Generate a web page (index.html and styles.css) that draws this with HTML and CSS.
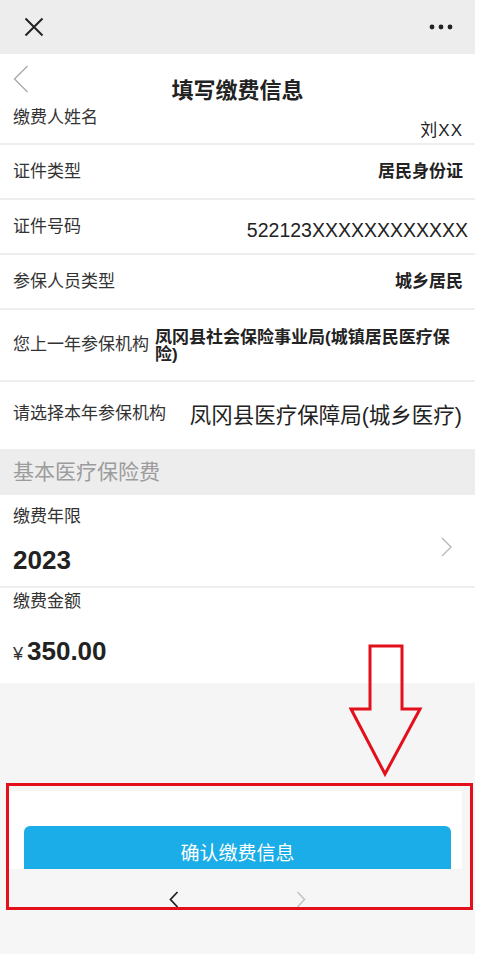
FILE: index.html
```html
<!DOCTYPE html>
<html lang="zh-CN">
<head>
<meta charset="utf-8">
<title>填写缴费信息</title>
<link rel="stylesheet" href="styles.css">
</head>
<body>
<main class="page">
  <header class="topbar">
    <svg class="icon-close" width="20" height="20" viewBox="0 0 20 20"><path d="M1.5 1.5 L18.5 18.5 M18.5 1.5 L1.5 18.5" stroke="#222" stroke-width="2" fill="none"/></svg>
    <svg class="icon-more" width="24" height="6" viewBox="0 0 24 6"><circle cx="3" cy="3" r="2.4" fill="#222"/><circle cx="12" cy="3" r="2.4" fill="#222"/><circle cx="21" cy="3" r="2.4" fill="#222"/></svg>
  </header>

  <div class="titlebar">
    <svg class="icon-back" width="16" height="28" viewBox="0 0 16 28"><path d="M14.5 1 L1.5 14 L14.5 27" stroke="#a8a8a8" stroke-width="1.3" fill="none"/></svg>
    <h1 class="title">填写缴费信息</h1>
    <span></span>
  </div>

  <section class="list">
    <div class="row row-name">
      <span class="label">缴费人姓名</span>
      <span class="value value-name">刘XX</span>
    </div>
    <div class="row row-std">
      <span class="label">证件类型</span>
      <span class="value value-strong">居民身份证</span>
    </div>
    <div class="row row-std">
      <span class="label">证件号码</span>
      <span class="value value-id">522123XXXXXXXXXXXX</span>
    </div>
    <div class="row row-std">
      <span class="label">参保人员类型</span>
      <span class="value value-strong">城乡居民</span>
    </div>
    <div class="row row-prev">
      <span class="label">您上一年参保机构</span>
      <span class="value value-prev">凤冈县社会保险事业局(城镇居民医疗保险)</span>
    </div>
    <div class="row row-cur">
      <span class="label">请选择本年参保机构</span>
      <span class="value value-cur">凤冈县医疗保障局(城乡医疗)</span>
    </div>
  </section>

  <div class="section-head">基本医疗保险费</div>

  <section class="list">
    <div class="row-stack row-year">
      <div class="stack">
        <span class="label">缴费年限</span>
        <span class="big">2023</span>
      </div>
      <svg class="icon-next" width="11" height="20" viewBox="0 0 11 20"><path d="M1 1 L10 10 L1 19" stroke="#b8b8b8" stroke-width="1.4" fill="none"/></svg>
    </div>
    <div class="row-stack row-amount">
      <div class="stack">
        <span class="label">缴费金额</span>
        <span class="big"><span class="yen">¥</span>350.00</span>
      </div>
    </div>
  </section>

  <div class="gap"></div>

  <div class="panel">
    <button class="confirm" type="button">确认缴费信息</button>
  </div>

  <nav class="browser-nav">
    <svg width="10" height="17" viewBox="0 0 10 17"><path d="M8.5 1 L1.5 8.5 L8.5 16" stroke="#222" stroke-width="1.8" fill="none"/></svg>
    <svg width="10" height="17" viewBox="0 0 10 17"><path d="M1.5 1 L8.5 8.5 L1.5 16" stroke="#c4c4c4" stroke-width="1.6" fill="none"/></svg>
  </nav>

  <svg class="arrow" width="80" height="140" viewBox="0 0 80 140"><path d="M21 2 L53 2 L53 65 L71 65 L36 130 L2 65 L21 65 Z" stroke="#e3101c" stroke-width="3" fill="none" stroke-linejoin="miter"/></svg>
  <div class="mark"></div>
</main>
</body>
</html>
```

FILE: styles.css
```css
html {
  background: #ffffff;
}
body {
  margin: 0;
  font-family: "Liberation Sans", "Noto Sans CJK SC", sans-serif;
  color: #333;
}
.page {
  position: relative;
  width: 475px;
  height: 954px;
  overflow: hidden;
  background: #f5f5f5;
  display: flex;
  flex-direction: column;
}

/* top bar */
.topbar {
  height: 54px;
  flex-shrink: 0;
  background: #ededed;
  display: flex;
  align-items: center;
  justify-content: space-between;
  padding: 0 22px 0 24px;
}
.icon-close { margin-top: -1px; }

/* title bar */
.titlebar {
  height: 50px;
  flex-shrink: 0;
  background: #fff;
  display: grid;
  grid-template-columns: 1fr auto 1fr;
  align-items: start;
}
.icon-back {
  margin: 11px 0 0 13px;
}
.title {
  margin: 26px 0 0;
  font-size: 22px;
  line-height: 22px;
  font-weight: 700;
  color: #222;
}

/* list rows */
.list {
  background: #fff;
  flex-shrink: 0;
}
.row {
  display: flex;
  justify-content: space-between;
  align-items: center;
  padding: 0 12px 0 13px;
  border-bottom: 2px solid #eeeeee;
  box-sizing: border-box;
  white-space: nowrap;
}
.label {
  font-size: 17px;
  line-height: 20px;
  color: #333;
  flex-shrink: 0;
}
.value {
  font-size: 17px;
  line-height: 20px;
  color: #222;
}
.row-name {
  height: 41px;
  align-items: stretch;
  padding-top: 4px;
  padding-bottom: 2px;
}
.row-name .label { align-self: flex-start; }
.row-name .value { align-self: flex-end; }
.value-name { letter-spacing: 1px; }
.row-std { height: 55px; }
.value-strong { font-weight: 700; }
.value-id {
  font-size: 19.5px;
  flex-shrink: 0;
  margin-right: -5px;
  padding-top: 6px;
}
.row-prev {
  height: 72px;
  white-space: normal;
  justify-content: flex-start;
}
.value-prev {
  font-weight: 700;
  line-height: 17px;
  margin-left: 6px;
  flex: 1;
  padding-top: 2px;
}
.row-cur {
  height: 67px;
  border-bottom: none;
}
.row-cur .label { margin-top: -4px; }
.value-cur {
  font-size: 21.5px;
  line-height: 26px;
  margin-right: 1px;
}

.section-head {
  height: 46px;
  flex-shrink: 0;
  background: #ededed;
  font-size: 21px;
  line-height: 46px;
  color: #9c9c9c;
  padding-left: 13px;
}

.row-stack {
  display: flex;
  justify-content: space-between;
  align-items: center;
  padding: 0 23px 0 13px;
  box-sizing: border-box;
}
.stack {
  display: flex;
  flex-direction: column;
  align-self: stretch;
}
.row-year {
  height: 93px;
  border-bottom: 2px solid #eeeeee;
  padding-top: 12px;
}
.row-year .big { margin-top: 18px; }
.icon-next { margin-top: 0; }
.row-amount {
  height: 95px;
  padding-top: 4px;
}
.row-amount .big { margin-top: 24px; }
.big {
  font-size: 26px;
  line-height: 30px;
  font-weight: 700;
  color: #222;
}
.yen {
  font-size: 18px;
  font-weight: 400;
  margin-right: 4px;
  color: #333;
}

/* bottom */
.gap {
  height: 108px;
  flex-shrink: 0;
}
.panel {
  height: 78px;
  flex-shrink: 0;
  margin: 0 13px 0 9px;
  background: #fff;
  overflow: hidden;
  padding: 35px 11px 0 15px;
  box-sizing: border-box;
}
.confirm {
  display: block;
  width: 100%;
  height: 56px;
  border: none;
  border-radius: 6px;
  background: #1aade7;
  color: #fff;
  font-family: "Liberation Sans", "Noto Sans CJK SC", sans-serif;
  font-size: 19px;
  line-height: 20px;
  padding: 0;
}
.browser-nav {
  flex: 1;
  display: flex;
  justify-content: center;
  gap: 117px;
  padding-top: 22px;
  align-items: flex-start;
  background: #f6f6f6;
}

/* annotation overlays */
.arrow {
  position: absolute;
  left: 349px;
  top: 644px;
}
.mark {
  position: absolute;
  left: 6px;
  top: 783px;
  width: 467px;
  height: 127px;
  box-sizing: border-box;
  border: 3px solid #e3101c;
}
```
